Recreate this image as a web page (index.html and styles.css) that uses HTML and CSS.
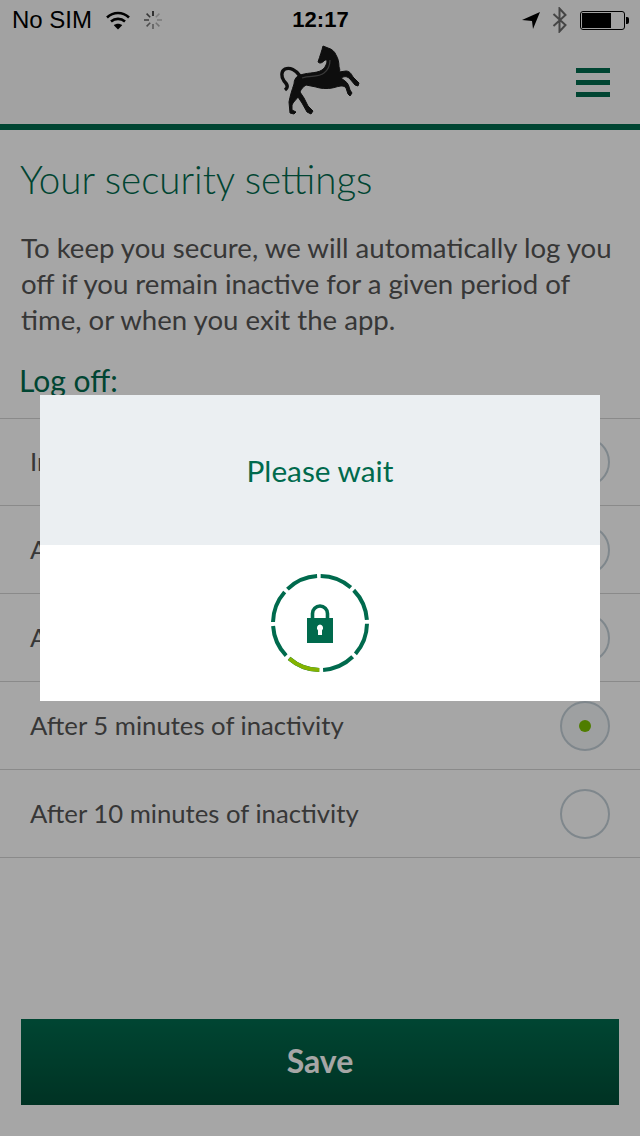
FILE: index.html
```html
<!DOCTYPE html>
<html lang="en">
  <head>
    <meta charset="UTF-8" />
    <meta name="viewport" content="width=device-width, initial-scale=1.0" />
    <title>Your security settings</title>
    <link rel="stylesheet" href="styles.css">
  </head>
  <body>
    <div class="statusBar">
      <div class="statusLeft">
        <span>No SIM</span>
        <svg class="wifiIcon" width="26" height="20" viewBox="0 0 26 20">
          <path d="M2 7.5C8.5 1.5 17.5 1.5 24 7.5" fill="none" stroke="#000" stroke-width="2.6" />
          <path d="M6 11.5C10 8 16 8 20 11.5" fill="none" stroke="#000" stroke-width="2.6" />
          <path d="M13 19.5L8.8 15.3C11 13.3 15 13.3 17.2 15.3Z" fill="#000" />
        </svg>
        <svg class="spinnerIcon" width="20" height="20" viewBox="0 0 20 20" stroke-width="1.6">
          <path d="M10 1V6" stroke="#222" />
          <path d="M16.4 3.6L12.8 7.2" stroke="#c4c4c4" />
          <path d="M19 10H14" stroke="#bdbdbd" />
          <path d="M16.4 16.4L12.8 12.8" stroke="#b0b0b0" />
          <path d="M10 19V14" stroke="#8c8c8c" />
          <path d="M3.6 16.4L7.2 12.8" stroke="#777" />
          <path d="M1 10H6" stroke="#666" />
          <path d="M3.6 3.6L7.2 7.2" stroke="#555" />
        </svg>
      </div>
      <div class="statusTime">12:17</div>
      <div class="statusRight">
        <svg width="20" height="20" viewBox="0 0 20 20">
          <path d="M1 10L19 2L12 19L11 11Z" fill="#000" />
        </svg>
        <svg width="16" height="26" viewBox="0 0 16 26">
          <path d="M1.5 7L13.5 18L7.5 24.5V1.5L13.5 8L1.5 19" fill="none" stroke="#6b6b6b" stroke-width="2" />
        </svg>
        <div class="battery">
          <div class="batteryLevel"></div>
        </div>
        <div class="batteryNub"></div>
      </div>
    </div>

    <header class="appHeader">
      <div></div>
      <svg class="horse" width="100" height="80" viewBox="0 0 100 80">
        <path d="M30 36C26 30 20 27 15 29C11 31 11 37 14 41C17 44 19 47 15 50" fill="none" stroke="#161616" stroke-width="3.4" />
        <path d="M53 6L58 8C62 9 65 12 66 15C68 18 69 22 69 27C70 29 70 31 69 32L76 31C79 31 81 33 83 37L89 43L88 46L85 45L80 39C78 37 76 36 73 37L71 38L75 41C78 43 79 46 80 50L82 53L80 56L78 54L76 48C74 45 70 46 66 47C60 49 52 49 46 47L36 45C33 47 31 49 30 52L34 58L38 66L43 71L41 74L37 72L32 63L28 57C26 60 23 62 22 65L22 70L26 72L24 74L20 73L19 62C20 56 22 50 24 44C24 40 26 37 28 36C36 32 46 34 52 30C56 27 57 23 57 20L55 20C52 23 50 24 48 22C50 16 52 10 53 6Z" fill="#161616" stroke="#161616" stroke-width="1" />
        <path d="M32 38C40 35 48 38 54 33C58 30 60 26 60 20" fill="none" stroke="#5a5a5a" stroke-width="1.2" />
      </svg>
      <div class="menuIcon">
        <span></span>
        <span></span>
        <span></span>
      </div>
    </header>

    <h1>Your security settings</h1>
    <p class="intro">
      To keep you secure, we will automatically log you off if you remain
      inactive for a given period of time, or when you exit the app.
    </p>
    <h2>Log off:</h2>

    <div class="optionList">
      <div class="optionRow">
        <span>Immediately</span>
        <div class="radio"></div>
      </div>
      <div class="optionRow">
        <span>After 1 minute of inactivity</span>
        <div class="radio"></div>
      </div>
      <div class="optionRow">
        <span>After 2 minutes of inactivity</span>
        <div class="radio"></div>
      </div>
      <div class="optionRow">
        <span>After 5 minutes of inactivity</span>
        <div class="radio selected"><div class="radioDot"></div></div>
      </div>
      <div class="optionRow">
        <span>After 10 minutes of inactivity</span>
        <div class="radio"></div>
      </div>
    </div>

    <button class="saveButton">Save</button>

    <div class="overlay">
      <div class="modal">
        <div class="modalTop">Please wait</div>
        <div class="modalBottom">
          <svg width="110" height="110" viewBox="0 0 110 110">
            <circle class="ringTrack" cx="55" cy="55" r="47" transform="rotate(-89.2 55 55)" />
            <circle class="ringProgress" cx="55" cy="55" r="47" transform="rotate(90.8 55 55)" />
            <path d="M47.5 50V45.5A7.5 7.5 0 0 1 62.5 45.5V50" fill="none" stroke="#006a4d" stroke-width="3.6" />
            <path d="M42 50H68V75H42Z" fill="#006a4d" />
            <path d="M55 56.5A3.5 3.5 0 0 1 57 62.5V67H53V62.5A3.5 3.5 0 0 1 55 56.5Z" fill="#fff" />
          </svg>
        </div>
      </div>
    </div>
  </body>
</html>
```

FILE: styles.css
```css
html,
body {
  margin: 0;
  padding: 0;
  height: 1136px;
  overflow: hidden;
}

body {
  font-family: Lato, "Noto Sans", sans-serif;
  background-color: #fff;
  color: #555;
  position: relative;
}

.statusBar {
  height: 40px;
  padding: 0 11px 0 12px;
  background-color: #f9f9f9;
  display: grid;
  grid-template-columns: 1fr auto 1fr;
  align-items: center;
  font-family: "Liberation Sans", Arial, sans-serif;
  font-size: 24px;
  color: #000;
}

.statusLeft {
  display: flex;
  align-items: center;
}

.wifiIcon {
  margin-left: 13px;
}

.spinnerIcon {
  margin-left: 12px;
}

.statusTime {
  font-size: 22px;
  font-weight: bold;
}

.statusRight {
  display: flex;
  align-items: center;
  justify-content: flex-end;
}

.statusRight svg {
  margin-right: 11px;
}

.battery {
  width: 41px;
  height: 15px;
  border: 1px solid #000;
  border-radius: 3px;
  padding: 1px;
  margin-left: 1px;
}

.batteryLevel {
  width: 29px;
  height: 15px;
  background-color: #000;
}

.batteryNub {
  width: 3px;
  height: 7px;
  margin-left: 1px;
  background-color: #000;
  border-radius: 0 2px 2px 0;
}

.appHeader {
  height: 84px;
  background-color: #f9f9f9;
  display: grid;
  grid-template-columns: 1fr 100px 1fr;
}

.menuIcon {
  margin: 28px 30px 0 auto;
  width: 34px;
  display: flex;
  flex-direction: column;
  gap: 7px;
}

.menuIcon span {
  height: 5px;
  background-color: #006a4d;
}

.horse {
  display: block;
}

h1 {
  margin: 0;
  padding: 22px 20px 0;
  height: 66px;
  border-top: 6px solid #006a4d;
  font-size: 38.5px;
  line-height: 54px;
  font-weight: 300;
  color: #006a4d;
}

.intro {
  margin: 0;
  padding: 12px 21px 0;
  font-size: 27.6px;
  line-height: 36px;
}

h2 {
  margin: 0;
  padding: 24px 19px 0;
  height: 56px;
  font-size: 30px;
  line-height: 36px;
  font-weight: 400;
  color: #006a4d;
}

.optionList {
  border-top: 1px solid #d5d5d5;
}

.optionRow {
  height: 87px;
  padding: 0 30px;
  border-bottom: 1px solid #d5d5d5;
  display: flex;
  align-items: center;
  justify-content: space-between;
  font-size: 25.7px;
}

.optionRow:first-child {
  height: 86px;
}

.optionRow span {
  margin-top: -2px;
}

.radio {
  width: 46px;
  height: 46px;
  border: 2px solid #c4d0d8;
  border-radius: 50%;
  display: flex;
  align-items: center;
  justify-content: center;
}

.selected {
  background-color: #f3f6f8;
}

.radioDot {
  width: 12px;
  height: 12px;
  border-radius: 50%;
  background-color: #7ac000;
}

.saveButton {
  display: block;
  width: 598px;
  height: 86px;
  margin: 161px 21px 0;
  padding: 0 0 4px;
  border: none;
  background: linear-gradient(#006b4e, #004e37);
  color: #fff;
  font-family: Lato, "Noto Sans", sans-serif;
  font-size: 32px;
  font-weight: 700;
}

.overlay {
  position: absolute;
  top: 0;
  left: 0;
  right: 0;
  bottom: 0;
  background-color: rgba(0, 0, 0, 0.35);
  padding: 395px 40px 0;
}

.modalTop {
  height: 150px;
  background-color: #ebeff2;
  color: #006a4d;
  font-size: 29.8px;
  display: flex;
  align-items: center;
  justify-content: center;
}

.modalBottom {
  height: 156px;
  background-color: #fff;
  display: flex;
  align-items: center;
  justify-content: center;
}

.ringTrack,
.ringProgress {
  fill: none;
  stroke-width: 4;
}

.ringTrack {
  stroke: #006a4d;
  stroke-dasharray: 32.9 4;
}

.ringProgress {
  stroke: #84b300;
  stroke-dasharray: 32.9 262.4;
}
```
